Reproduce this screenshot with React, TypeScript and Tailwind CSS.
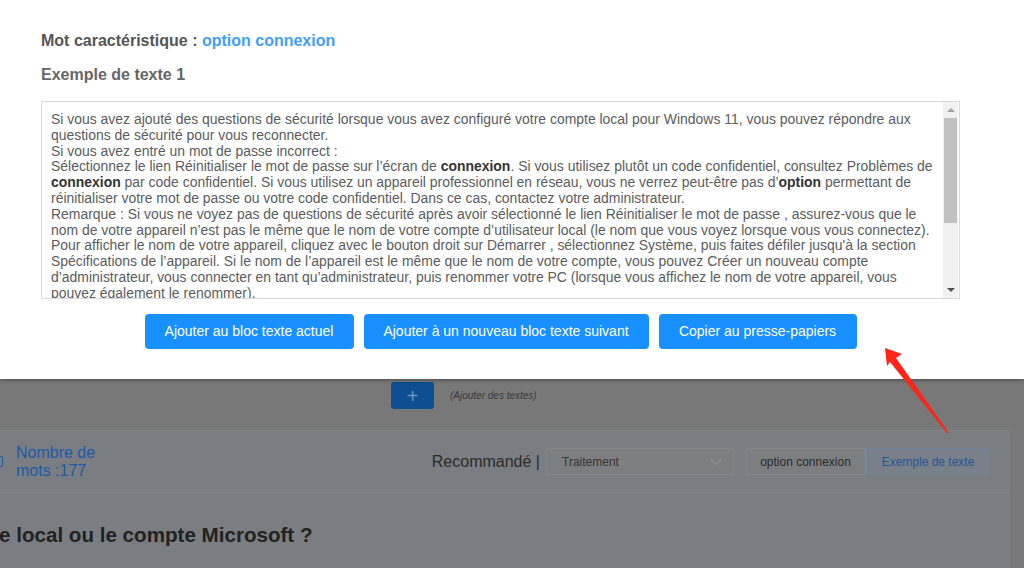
import React from "react";

const buttons = [
  { label: "Ajouter au bloc texte actuel", w: "w-[209px]" },
  { label: "Ajouter à un nouveau bloc texte suivant", w: "w-[285px]" },
  { label: "Copier au presse-papiers", w: "w-[198px]" },
];

function FakeScrollbar() {
  return (
    <div className="w-[15px] shrink-0 mr-[1px] bg-[#f1f1f1] flex flex-col">
      <div className="h-[16px] flex items-center justify-center">
        <div className="w-0 h-0 border-l-[4px] border-r-[4px] border-b-[4px] border-l-transparent border-r-transparent border-b-[#a3a3a3]" />
      </div>
      <div className="mx-[1px] h-[105px] bg-[#c1c1c1]" />
      <div className="mt-auto h-[16px] flex items-center justify-center">
        <div className="w-0 h-0 border-l-[4px] border-r-[4px] border-t-[4px] border-l-transparent border-r-transparent border-t-[#505050]" />
      </div>
    </div>
  );
}

function SampleText() {
  return (
    <div className="flex-1 overflow-hidden pl-[9px] pr-[2px] pt-[10px] text-[13.95px] leading-[15.8px] text-[#5a5c60]">
      Si vous avez ajouté des questions de sécurité lorsque vous avez configuré votre compte local pour Windows 11, vous
      pouvez répondre aux questions de sécurité pour vous reconnecter.
      <br />
      Si vous avez entré un mot de passe incorrect :
      <br />
      Sélectionnez le lien Réinitialiser le mot de passe sur l’écran de <b className="text-[#333]">connexion</b>. Si vous
      utilisez plutôt un code confidentiel, consultez Problèmes de <b className="text-[#333]">connexion</b> par code
      confidentiel. Si vous utilisez un appareil professionnel en réseau, vous ne verrez peut-être pas d’
      <b className="text-[#333]">option</b> permettant de réinitialiser votre mot de passe ou votre code confidentiel. Dans
      ce cas, contactez votre administrateur.
      <br />
      Remarque : Si vous ne voyez pas de questions de sécurité après avoir sélectionné le lien Réinitialiser le mot de
      passe , assurez-vous que le nom de votre appareil n’est pas le même que le nom de votre compte d’utilisateur local
      (le nom que vous voyez lorsque vous vous connectez).
      <br />
      Pour afficher le nom de votre appareil, cliquez avec le bouton droit sur Démarrer , sélectionnez Système, puis
      faites défiler jusqu'à la section Spécifications de l’appareil. Si le nom de l’appareil est le même que le nom de
      votre compte, vous pouvez Créer un nouveau compte d’administrateur, vous connecter en tant qu’administrateur, puis
      renommer votre PC (lorsque vous affichez le nom de votre appareil, vous pouvez également le renommer).
    </div>
  );
}

export default function App() {
  return (
    <div className="relative w-[1024px] h-[568px] overflow-hidden flex flex-col bg-[#787878] font-['Liberation_Sans',Arial,sans-serif]">
      {/* --- MODAL --- */}
      <section className="relative z-10 h-[379px] shrink-0 bg-white shadow-[0_1px_4px_rgba(0,0,0,0.4)] pl-[41px] pr-[64px] pt-[31px]">
        <h2 className="text-[16px] leading-[20px] font-bold text-[#555]">
          Mot caractéristique : <span className="text-[#409eff]">option connexion</span>
        </h2>
        <h3 className="mt-[14px] text-[16px] leading-[20px] font-bold text-[#666]">Exemple de texte 1</h3>

        <div className="mt-[16px] h-[198px] border border-[#d9d9d9] flex">
          <SampleText />
          <FakeScrollbar />
        </div>

        <div className="mt-[15px] flex justify-center gap-[10px]">
          {buttons.map((b) => (
            <button
              key={b.label}
              className={`${b.w} h-[35px] rounded-[4px] bg-[#1890ff] text-white text-[14px] leading-[35px] text-center`}
            >
              {b.label}
            </button>
          ))}
        </div>
      </section>

      {/* --- DIMMED PAGE BEHIND --- */}
      <div className="flex-1">
        <div className="pt-[3px] pl-[391px] flex items-center gap-[16px]">
          <div className="w-[43px] h-[27px] rounded-[3px] bg-[#0d4f91] flex items-center justify-center text-[#6f92bf] text-[20px] font-light leading-none">
            +
          </div>
          <span className="text-[10px] italic text-[#3a3a3a]">(Ajouter des textes)</span>
        </div>

        <div className="mt-[21px] ml-[-20px] w-[1030px] h-[200px] bg-[#7a7d82] rounded-tr-[4px] border-t border-r border-[#7f8287]">
          <div className="h-[62px] flex items-center pl-[13px] pr-[19px] border-b border-[#818489]">
            <div className="w-[10px] h-[11px] border-[1.5px] border-[#1d5aa8] rounded-[2px]" />
            <div className="ml-[13px] text-[16px] leading-[18px] text-[#1d5aa8]">
              Nombre de
              <br />
              mots :177
            </div>

            <div className="ml-auto flex items-center">
              <span className="text-[16px] text-[#2b2b2b]">Recommandé |</span>
              <div className="ml-[5px] w-[190px] h-[27px] rounded-[3px] bg-[#7c7e82] border border-[#86888c] flex items-center pl-[16px] pr-[12px]">
                <span className="text-[12px] text-[#353535]">Traitement</span>
                <svg className="ml-auto" width="12" height="8" viewBox="0 0 12 8" fill="none">
                  <path d="M1 1.5l5 5 5-5" stroke="#8d8f93" strokeWidth="1.2" />
                </svg>
              </div>
              <div className="ml-[10px] flex h-[27px] text-[12px]">
                <div className="w-[121px] flex items-center justify-center rounded-l-[3px] border border-[#86888c] bg-[#7c7e82] text-[#2b2b2b]">
                  option connexion
                </div>
                <div className="w-[124px] flex items-center justify-center rounded-r-[3px] border border-[#71839f] bg-[#798089] text-[#23569a]">
                  Exemple de texte
                </div>
              </div>
            </div>
          </div>

          <h2 className="pl-[19px] pt-[30px] text-[20.6px] leading-[24px] font-bold text-[#222] whitespace-nowrap">
            e local ou le compte Microsoft ?
          </h2>
        </div>
      </div>

      {/* --- RED ANNOTATION ARROW --- */}
      <svg
        className="absolute inset-0 z-20 pointer-events-none"
        width="1024"
        height="568"
        viewBox="0 0 1024 568"
      >
        <polygon
          points="885,348 902,354 896,358 949,433 947,433 890,362 887,366"
          fill="#ff2418"
        />
      </svg>
    </div>
  );
}
